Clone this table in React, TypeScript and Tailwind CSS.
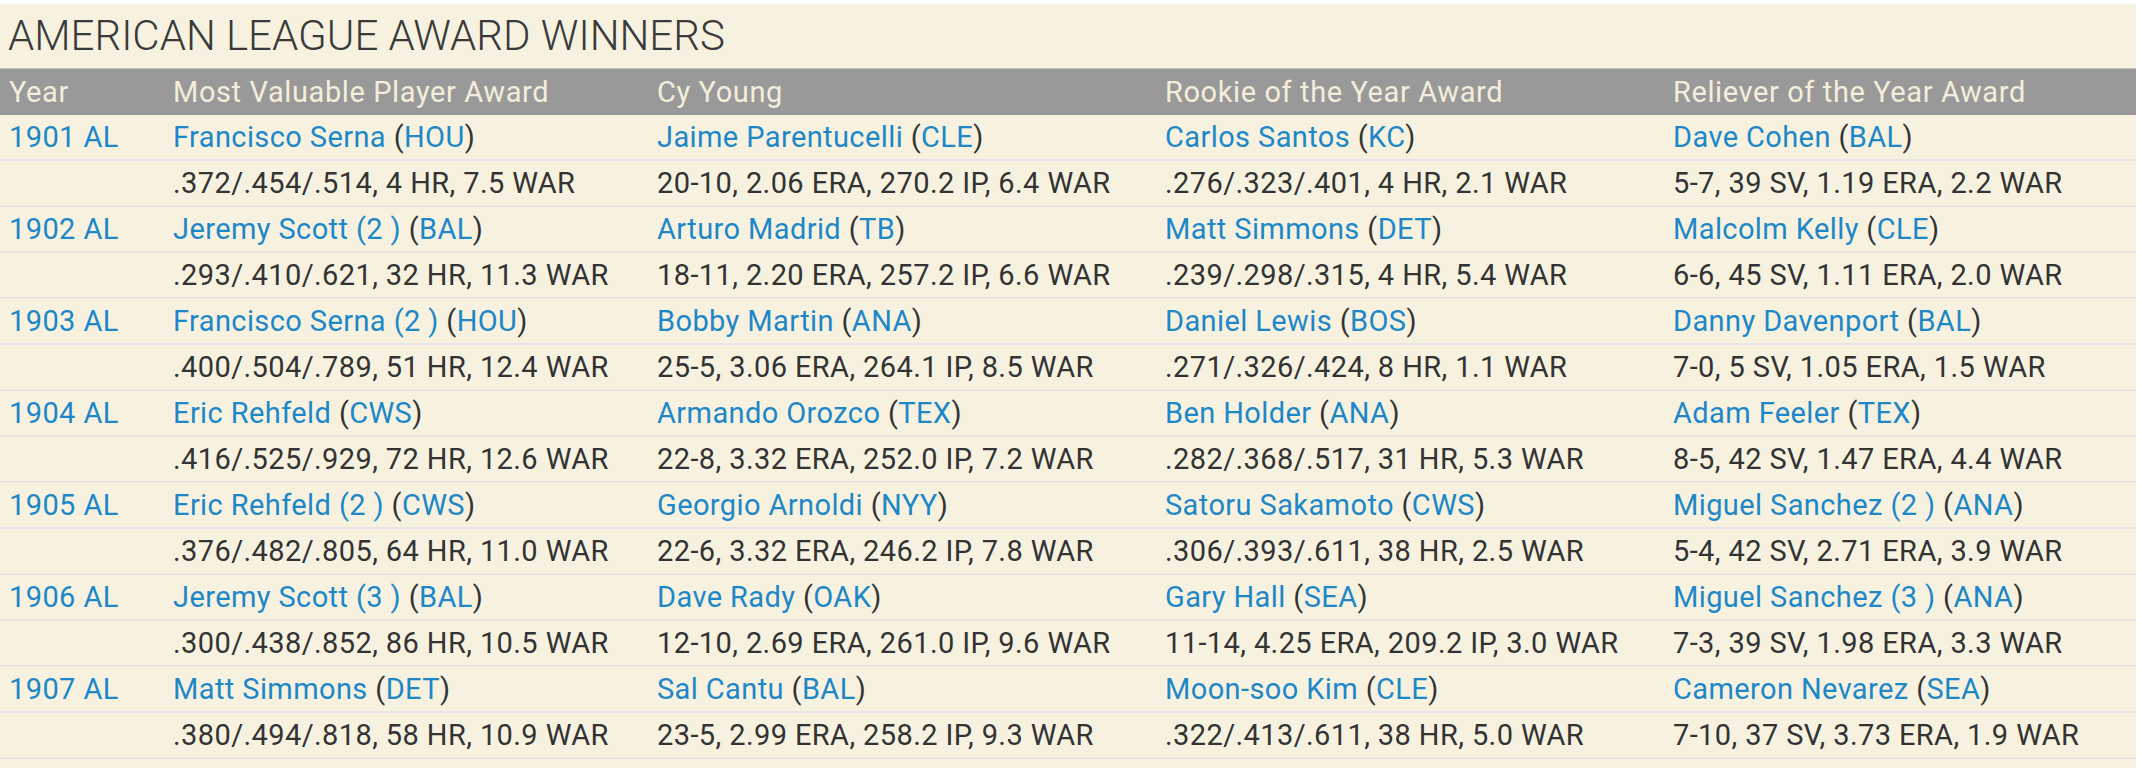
import React from "react";

type Winner = { name: string; team: string; line: string };
type Season = { year: string; awards: Winner[] };

const SEASONS: Season[] = [
  {
    year: "1901 AL",
    awards: [
      { name: "Francisco Serna", team: "HOU", line: ".372/.454/.514, 4 HR, 7.5 WAR" },
      { name: "Jaime Parentucelli", team: "CLE", line: "20-10, 2.06 ERA, 270.2 IP, 6.4 WAR" },
      { name: "Carlos Santos", team: "KC", line: ".276/.323/.401, 4 HR, 2.1 WAR" },
      { name: "Dave Cohen", team: "BAL", line: "5-7, 39 SV, 1.19 ERA, 2.2 WAR" },
    ],
  },
  {
    year: "1902 AL",
    awards: [
      { name: "Jeremy Scott (2 )", team: "BAL", line: ".293/.410/.621, 32 HR, 11.3 WAR" },
      { name: "Arturo Madrid", team: "TB", line: "18-11, 2.20 ERA, 257.2 IP, 6.6 WAR" },
      { name: "Matt Simmons", team: "DET", line: ".239/.298/.315, 4 HR, 5.4 WAR" },
      { name: "Malcolm Kelly", team: "CLE", line: "6-6, 45 SV, 1.11 ERA, 2.0 WAR" },
    ],
  },
  {
    year: "1903 AL",
    awards: [
      { name: "Francisco Serna (2 )", team: "HOU", line: ".400/.504/.789, 51 HR, 12.4 WAR" },
      { name: "Bobby Martin", team: "ANA", line: "25-5, 3.06 ERA, 264.1 IP, 8.5 WAR" },
      { name: "Daniel Lewis", team: "BOS", line: ".271/.326/.424, 8 HR, 1.1 WAR" },
      { name: "Danny Davenport", team: "BAL", line: "7-0, 5 SV, 1.05 ERA, 1.5 WAR" },
    ],
  },
  {
    year: "1904 AL",
    awards: [
      { name: "Eric Rehfeld", team: "CWS", line: ".416/.525/.929, 72 HR, 12.6 WAR" },
      { name: "Armando Orozco", team: "TEX", line: "22-8, 3.32 ERA, 252.0 IP, 7.2 WAR" },
      { name: "Ben Holder", team: "ANA", line: ".282/.368/.517, 31 HR, 5.3 WAR" },
      { name: "Adam Feeler", team: "TEX", line: "8-5, 42 SV, 1.47 ERA, 4.4 WAR" },
    ],
  },
  {
    year: "1905 AL",
    awards: [
      { name: "Eric Rehfeld (2 )", team: "CWS", line: ".376/.482/.805, 64 HR, 11.0 WAR" },
      { name: "Georgio Arnoldi", team: "NYY", line: "22-6, 3.32 ERA, 246.2 IP, 7.8 WAR" },
      { name: "Satoru Sakamoto", team: "CWS", line: ".306/.393/.611, 38 HR, 2.5 WAR" },
      { name: "Miguel Sanchez (2 )", team: "ANA", line: "5-4, 42 SV, 2.71 ERA, 3.9 WAR" },
    ],
  },
  {
    year: "1906 AL",
    awards: [
      { name: "Jeremy Scott (3 )", team: "BAL", line: ".300/.438/.852, 86 HR, 10.5 WAR" },
      { name: "Dave Rady", team: "OAK", line: "12-10, 2.69 ERA, 261.0 IP, 9.6 WAR" },
      { name: "Gary Hall", team: "SEA", line: "11-14, 4.25 ERA, 209.2 IP, 3.0 WAR" },
      { name: "Miguel Sanchez (3 )", team: "ANA", line: "7-3, 39 SV, 1.98 ERA, 3.3 WAR" },
    ],
  },
  {
    year: "1907 AL",
    awards: [
      { name: "Matt Simmons", team: "DET", line: ".380/.494/.818, 58 HR, 10.9 WAR" },
      { name: "Sal Cantu", team: "BAL", line: "23-5, 2.99 ERA, 258.2 IP, 9.3 WAR" },
      { name: "Moon-soo Kim", team: "CLE", line: ".322/.413/.611, 38 HR, 5.0 WAR" },
      { name: "Cameron Nevarez", team: "SEA", line: "7-10, 37 SV, 3.73 ERA, 1.9 WAR" },
    ],
  },
];

const COLUMNS = ["Year", "Most Valuable Player Award", "Cy Young", "Rookie of the Year Award", "Reliever of the Year Award"];

const ROW = "grid grid-cols-[164px_484px_508px_508px_1fr]";

export default function App() {
  return (
    <div className="bg-white min-h-screen pt-[4px] pr-[6px] font-['Roboto',sans-serif]">
      <div className="bg-[#f7f2e0] min-h-[764px]">
        {/* title */}
        <h1 className="h-[64px] leading-[64px] pl-[8px] text-[42px] font-light text-[#3a3a3a] whitespace-nowrap">
          AMERICAN LEAGUE AWARD WINNERS
        </h1>

        {/* header */}
        <div className={`${ROW} h-[47px] bg-[#999999] border-t border-[#c9c5b9] text-[29px] tracking-[0.6px] leading-[46px] text-[#f3eedb]`}>
          {COLUMNS.map((c) => (
            <div key={c} className="pl-[9px] whitespace-nowrap">
              {c}
            </div>
          ))}
        </div>

        {/* rows */}
        {SEASONS.map((s) => (
          <React.Fragment key={s.year}>
            <div className={`${ROW} h-[46px] border-b-2 border-[#e6e4e4] text-[29px] tracking-[0.4px] leading-[44px] text-[#333333]`}>
              <div className="pl-[9px] text-[#1d87c8] whitespace-nowrap">{s.year}</div>
              {s.awards.map((w) => (
                <div key={w.name} className="pl-[9px] whitespace-nowrap">
                  <span className="text-[#1d87c8]">{w.name}</span> (
                  <span className="text-[#1d87c8]">{w.team}</span>)
                </div>
              ))}
            </div>
            <div className={`${ROW} h-[46px] border-b-2 border-[#e6e4e4] text-[29px] tracking-[0.4px] leading-[44px] text-[#333333]`}>
              <div />
              {s.awards.map((w) => (
                <div key={w.name} className="pl-[9px] whitespace-nowrap">
                  {w.line}
                </div>
              ))}
            </div>
          </React.Fragment>
        ))}
      </div>
    </div>
  );
}
